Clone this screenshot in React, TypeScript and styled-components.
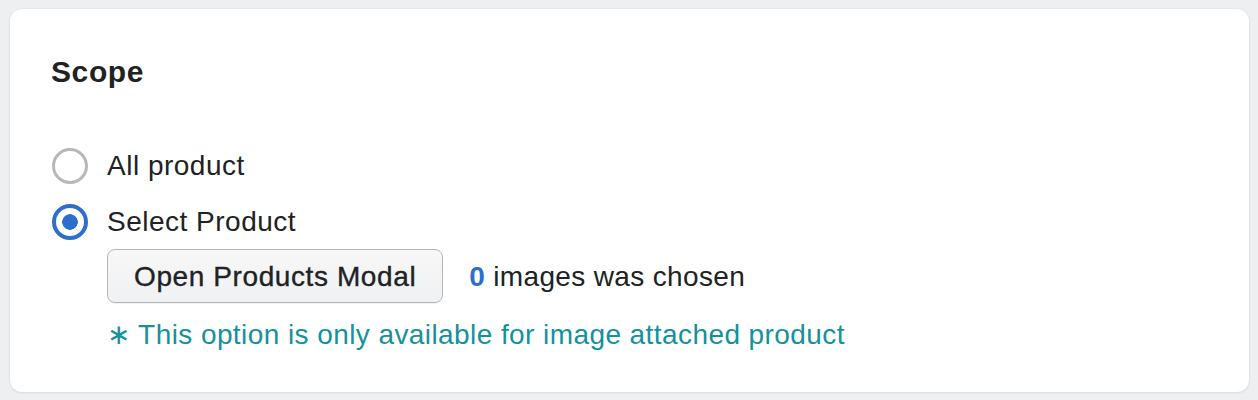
import styled, { createGlobalStyle } from 'styled-components';

const GlobalStyle = createGlobalStyle`
  body {
    margin: 0;
    background: #eeeff1;
    font-family: "Liberation Sans", Arial, sans-serif;
    color: #202223;
  }
`;

const StyledPage = styled.div`
  padding: 9px 9px 8px 10px;
`;

const StyledCard = styled.div`
  background: #ffffff;
  border-radius: 12px;
  box-shadow: 0 1px 3px rgba(0, 0, 0, 0.08), 0 0 0 1px rgba(0, 0, 0, 0.02);
  padding: 43px 41px 42px 41px;
  height: 383px;
  box-sizing: border-box;
`;

const StyledTitle = styled.h2`
  margin: 0;
  font-size: 30px;
  line-height: 40px;
  font-weight: 700;
  letter-spacing: 0.6px;
`;

const StyledOptions = styled.div`
  display: flex;
  flex-direction: column;
  gap: 16px;
  margin-top: 54px;
`;

const StyledOption = styled.label`
  display: flex;
  align-items: center;
  gap: 18px;
  font-size: 28px;
  line-height: 40px;
  letter-spacing: 0.5px;
  cursor: pointer;
`;

const StyledRadio = styled.span<{ $checked?: boolean }>`
  width: 38px;
  height: 40px;
  display: flex;
  align-items: center;
  justify-content: center;
  flex-shrink: 0;

  &::before {
    content: '';
    width: 36px;
    height: 36px;
    box-sizing: border-box;
    border-radius: 50%;
    border: ${(p) => (p.$checked ? '4px solid #2c6ecb' : '3.5px solid #b7b8bb')};
    background: ${(p) =>
      p.$checked ? 'radial-gradient(circle, #2c6ecb 0 7.5px, #ffffff 8px)' : '#ffffff'};
  }
`;

const StyledDetails = styled.div`
  margin-left: 56px;
  margin-top: 7px;
  display: flex;
  flex-direction: column;
  gap: 12px;
`;

const StyledPickerRow = styled.div`
  display: flex;
  align-items: center;
  gap: 26px;
`;

const StyledButton = styled.button`
  height: 54px;
  padding: 2px 26px 0;
  border: 1.5px solid #b4b6b9;
  border-radius: 8px;
  background: linear-gradient(#f7f7f8, #f0f1f2);
  box-shadow: 0 1px 0 rgba(0, 0, 0, 0.05);
  font-family: "Liberation Sans", Arial, sans-serif;
  font-size: 28px;
  font-weight: 400;
  letter-spacing: 0.6px;
  color: #202223;
  -webkit-text-stroke: 0.35px #202223;
  cursor: pointer;
`;

const StyledCount = styled.span`
  font-size: 28px;
  line-height: 40px;
  letter-spacing: 0.35px;
  padding-top: 2px;
`;

const StyledNumber = styled.span`
  color: #2c6ecb;
  font-weight: 700;
`;

const StyledHint = styled.p`
  margin: 0;
  font-size: 28px;
  line-height: 40px;
  letter-spacing: 0.42px;
  color: #16919a;
`;

const App = () => {
    return (
        <>
            <GlobalStyle />
            <StyledPage>
                <StyledCard>
                    <StyledTitle>Scope</StyledTitle>
                    <StyledOptions>
                        <StyledOption>
                            <StyledRadio />
                            All product
                        </StyledOption>
                        <StyledOption>
                            <StyledRadio $checked />
                            Select Product
                        </StyledOption>
                    </StyledOptions>
                    <StyledDetails>
                        <StyledPickerRow>
                            <StyledButton>Open Products Modal</StyledButton>
                            <StyledCount>
                                <StyledNumber>0</StyledNumber> images was chosen
                            </StyledCount>
                        </StyledPickerRow>
                        <StyledHint>∗ This option is only available for image attached product</StyledHint>
                    </StyledDetails>
                </StyledCard>
            </StyledPage>
        </>
    );
};

export default App;
